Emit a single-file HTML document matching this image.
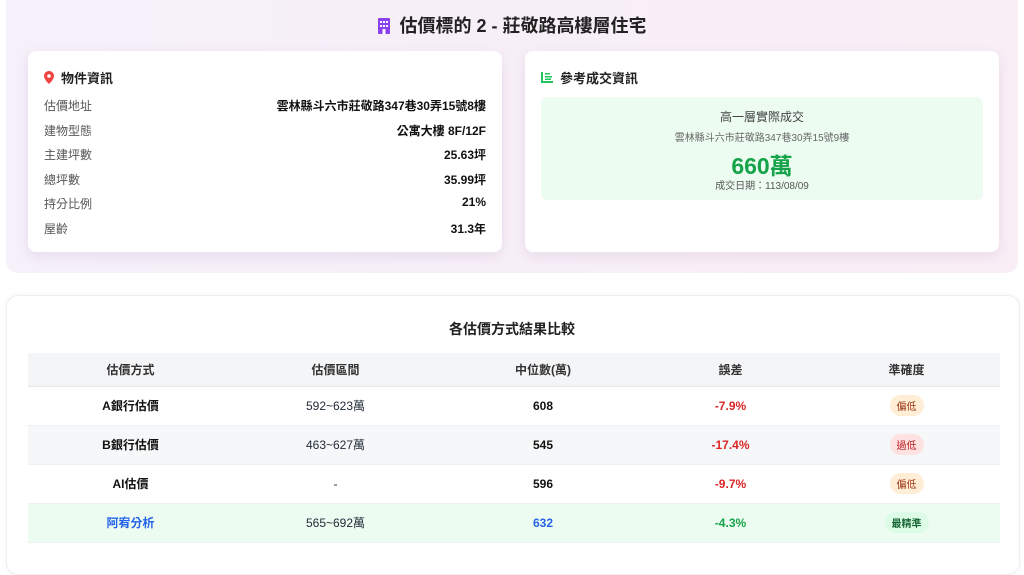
<!DOCTYPE html>
<html><head><meta charset="utf-8"><style>
*{margin:0;padding:0;box-sizing:border-box}
body{width:1024px;height:562px;overflow:hidden;background:#fff;font-family:"Liberation Sans","Noto Sans CJK TC",sans-serif;color:#1f2937;position:relative}
.top{position:absolute;left:6px;top:-10px;width:1012px;height:283px;background:linear-gradient(90deg,#f5f0fa,#f9eef6);border-radius:12px}
.title{position:absolute;top:12px;left:0;width:1024px;text-align:center;font-size:18px;font-weight:700;color:#222}
.card{position:absolute;top:51px;width:474px;height:201px;background:#fff;border-radius:8px;box-shadow:0 4px 12px rgba(120,80,140,.12)}
.ch{position:absolute;left:16px;top:17px;font-size:13px;font-weight:700;color:#222;display:flex;align-items:center;gap:7px}
.row{position:absolute;left:16px;right:16px;display:flex;justify-content:space-between;font-size:12px}
.row span:first-child{color:#555}
.row span:last-child{font-weight:700;color:#111}
.ref{position:absolute;left:16px;right:16px;top:46px;height:103px;background:#edfcf1;border-radius:6px;text-align:center}
.bottom{position:absolute;left:6px;top:295px;width:1014px;height:280px;background:#fff;border:1px solid #eee;border-radius:12px;box-shadow:0 0 6px rgba(0,0,0,.05)}
table{position:absolute;left:28px;top:353px;width:972px;border-collapse:collapse;font-size:12px;text-align:center}
th{height:33px;background:#f4f5f7;font-weight:700;color:#333;border-bottom:1px solid #e5e7eb}
td{height:39px;border-bottom:1px solid #eef0f2}
.b{font-weight:700;color:#111}
.red{color:#dc2626;font-weight:700}
.tag{display:inline-block;padding:3px 7px;border-radius:11px;font-size:10px}
</style></head><body>
<div class="top"></div>
<div class="title"><svg width="14" height="16" viewBox="0 0 14 16" style="vertical-align:-2px;margin-right:8px"><rect x="1" y="0" width="12" height="16" rx="1" fill="#8b3ff0"/><g fill="#fff"><rect x="3" y="3" width="2" height="2"/><rect x="6" y="3" width="2" height="2"/><rect x="9" y="3" width="2" height="2"/><rect x="3" y="7" width="2" height="2"/><rect x="6" y="7" width="2" height="2"/><rect x="9" y="7" width="2" height="2"/><rect x="5.5" y="11" width="3" height="5"/></g></svg>估價標的 2 - 莊敬路高樓層住宅</div>
<div class="card" style="left:28px">
<div class="ch"><svg width="10" height="13" viewBox="0 0 10 13"><path d="M5 0C2.2 0 0 2.2 0 5c0 3.5 5 8 5 8s5-4.5 5-8C10 2.2 7.8 0 5 0z" fill="#ef4444"/><circle cx="5" cy="5" r="1.8" fill="#fff"/></svg>物件資訊</div>
<div class="row" style="top:46px"><span>估價地址</span><span>雲林縣斗六市莊敬路347巷30弄15號8樓</span></div>
<div class="row" style="top:71px"><span>建物型態</span><span>公寓大樓 8F/12F</span></div>
<div class="row" style="top:95px"><span>主建坪數</span><span>25.63坪</span></div>
<div class="row" style="top:120px"><span>總坪數</span><span>35.99坪</span></div>
<div class="row" style="top:144px"><span>持分比例</span><span>21%</span></div>
<div class="row" style="top:169px"><span>屋齡</span><span>31.3年</span></div>
</div>
<div class="card" style="left:525px">
<div class="ch"><svg width="12" height="11" viewBox="0 0 12 11"><g fill="#22c55e"><rect x="0" y="0" width="2" height="11"/><rect x="0" y="9" width="12" height="2"/><rect x="4" y="1" width="5" height="1.5"/><rect x="4" y="4" width="7" height="1.5"/><rect x="4" y="6.5" width="6" height="1.5"/></g></svg>參考成交資訊</div>
<div class="ref">
<div style="position:absolute;top:11px;width:100%;font-size:12px;color:#444">高一層實際成交</div>
<div style="position:absolute;top:32px;width:100%;font-size:10px;color:#666">雲林縣斗六市莊敬路347巷30弄15號9樓</div>
<div style="position:absolute;top:50px;width:100%;font-size:23px;font-weight:700;color:#16a34a">660萬</div>
<div style="position:absolute;top:80px;width:100%;font-size:10px;color:#555">成交日期：113/08/09</div>
</div>
</div>
<div class="bottom"></div>
<div style="position:absolute;top:319px;left:0;width:1024px;text-align:center;font-size:14px;font-weight:700;color:#222">各估價方式結果比較</div>
<table>
<tr><th style="width:205px">估價方式</th><th style="width:205px">估價區間</th><th style="width:210px">中位數(萬)</th><th style="width:165px">誤差</th><th>準確度</th></tr>
<tr><td class="b">A銀行估價</td><td>592~623萬</td><td class="b">608</td><td class="red">-7.9%</td><td><span class="tag" style="background:#ffedd5;color:#9a3412">偏低</span></td></tr>
<tr style="background:#f6f7f8"><td class="b">B銀行估價</td><td>463~627萬</td><td class="b">545</td><td class="red">-17.4%</td><td><span class="tag" style="background:#fee2e2;color:#b91c1c">過低</span></td></tr>
<tr><td class="b">AI估價</td><td>-</td><td class="b">596</td><td class="red">-9.7%</td><td><span class="tag" style="background:#ffedd5;color:#9a3412">偏低</span></td></tr>
<tr style="background:#edfcf1"><td style="color:#2563eb;font-weight:700">阿宥分析</td><td>565~692萬</td><td style="color:#2563eb;font-weight:700">632</td><td style="color:#16a34a;font-weight:700">-4.3%</td><td><span class="tag" style="background:#dcfce7;color:#166534;font-weight:700">最精準</span></td></tr>
</table>
</body></html>
